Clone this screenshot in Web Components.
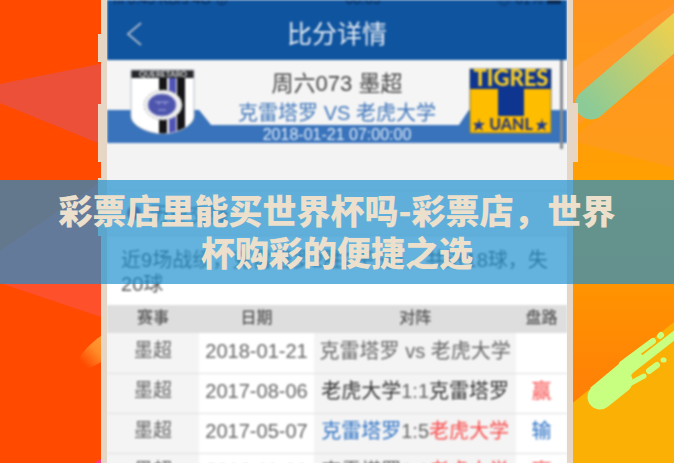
<!DOCTYPE html>
<html lang="zh-CN">
<head>
<meta charset="utf-8">
<meta name="viewport" content="width=device-width, initial-scale=1">
<title>彩票店里能买世界杯吗</title>
<style>
  body {
    margin: 0;
    font-family: "Liberation Sans", "Noto Sans CJK SC", sans-serif;
  }
</style>
</head>
<body>
<cover-page>
  <color-backdrop slot="backdrop"></color-backdrop>
  <phone-frame slot="phone">
    <nav-bar>比分详情</nav-bar>
    <match-header>
      <span slot="round">周六073 墨超</span>
      <span slot="teams">克雷塔罗 VS 老虎大学</span>
      <span slot="time">2018-01-21 07:00:00</span>
    </match-header>
    <section-title>历史交锋</section-title>
    <match-summary>近9场战绩，克雷塔罗2胜2平5负，共进18球，失20球</match-summary>
    <match-table></match-table>
  </phone-frame>
  <title-banner slot="banner">彩票店里能买世界杯吗-彩票店，世界杯购彩的便捷之选</title-banner>
</cover-page>

<script>
// Base class: puts the template of each component in its shadow root
class BaseElement extends HTMLElement {
  constructor() {
    super();
    this.attachShadow({ mode: 'open' });
    this.shadowRoot.innerHTML = this.render();
  }
}

// Stacks backdrop, phone and banner in the same grid cell
class CoverPage extends BaseElement {
  render() {
    return `
      <style>
        :host {
          display: grid;
          grid-template: 100vh / 100%;
          overflow: hidden;
        }
        slot::slotted(*) { grid-area: 1 / 1; }
        slot[name="phone"]::slotted(*) { width: 70%; justify-self: center; }
        slot[name="banner"]::slotted(*) { align-self: center; }
      </style>
      <slot name="backdrop"></slot>
      <slot name="phone"></slot>
      <slot name="banner"></slot>
    `;
  }
}

class ColorBackdrop extends BaseElement {
  render() {
    return `
      <style>
        :host { display: block; overflow: hidden; }
        svg { display: block; width: 100%; height: 100%; }
      </style>
      <svg viewBox="0 0 674 463" preserveAspectRatio="none" aria-hidden="true">
        <defs>
          <linearGradient id="sun" x1="0" y1="0" x2="0" y2="1">
            <stop offset="0" stop-color="#ff9420"/>
            <stop offset="0.4" stop-color="#ffa000"/>
            <stop offset="0.6" stop-color="#ff9500"/>
            <stop offset="0.9" stop-color="#ff7c08"/>
          </linearGradient>
          <linearGradient id="band" gradientUnits="userSpaceOnUse" x1="588" y1="106" x2="674" y2="32">
            <stop offset="0" stop-color="#8ccb97"/>
            <stop offset="1" stop-color="#ead050"/>
          </linearGradient>
          <linearGradient id="glow" x1="1" y1="0" x2="0" y2="1">
            <stop offset="0" stop-color="#ffa63c"/>
            <stop offset="0.45" stop-color="#ff8c28"/>
            <stop offset="0.8" stop-color="#ff4a00"/>
          </linearGradient>
        </defs>
        <rect width="337" height="463" fill="#ff4a00"/>
        <path d="M0 84 110 62V148L0 103Z" fill="#ec5038"/>
        <path d="M0 251 110 176V320L0 283Z" fill="#ff502c"/>
        <path d="M110 330C92 341 80 352 74 369C84 372 100 364 110 356Z" fill="url(#glow)"/>
        <path d="M94 463 101 459V463Z" fill="#ff3a80"/>
        <rect x="337" width="337" height="463" fill="url(#sun)"/>
        <path d="M570 70 674 4V60L570 130Z" fill="#ff9a38" opacity="0.6"/>
        <path d="M570 140 674 168V60Z" fill="#ff9a28" opacity="0.6"/>
        <path d="M591 104 694 16" stroke="url(#band)" stroke-width="31" stroke-linecap="round"/>
        <path d="M570 405 674 322V463H570Z" fill="#fbb006"/>
        <g stroke="#c9ff80" stroke-linecap="round" fill="none">
          <path d="M590 388 626 358C636 350 642 352 644 358L632 374C628 380 632 384 626 390L612 402Z" fill="#c9ff80" stroke="none"/>
          <path d="M600 397 620 381" stroke-width="25"/>
          <path d="M622 364 653 341" stroke-width="6"/>
          <path d="M660 336 661 335" stroke-width="6"/>
          <path d="M630 370 680 331" stroke-width="8"/>
          <path d="M622 388 644 376" stroke-width="5"/>
          <path d="M649 371 657 365" stroke-width="6"/>
          <path d="M663 360 664 360" stroke-width="5"/>
        </g>
        <path d="M98 34H110V62H98ZM98 104H110V162H98ZM98 178H110V236H98ZM564 103H578V162H564Z" fill="#e8d6c2"/>
      </svg>
    `;
  }
}

class PhoneFrame extends BaseElement {
  render() {
    return `
      <style>
        :host {
          display: block;
          position: relative;
          box-sizing: border-box;
          overflow: hidden;
          border: solid #e6d6c6;
          border-width: 0 6px;
          background: #f3f3f3;
        }
        .screen { filter: blur(1px); }
        .status {
          display: flex;
          justify-content: space-between;
          align-items: flex-end;
          height: 6px;
          padding: 0 6px 2px;
          overflow: hidden;
          background: #0f549f;
          color: #082a55;
          font-size: 14px;
          line-height: 14px;
        }
      </style>
      <div class="screen">
        <div class="status">
          <span>ııl 0.45 KB/s 4G ⊕</span>
          <span>08:05</span>
          <span>◎ 61% ▬</span>
        </div>
        <slot></slot>
      </div>
    `;
  }
}

class NavBar extends BaseElement {
  render() {
    return `
      <style>
        :host {
          display: grid;
          grid-template-columns: 1fr auto 1fr;
          align-items: center;
          height: 52px;
          padding: 0 18px;
          background: #0f549f;
          color: #e4ebf4;
        }
        button {
          justify-self: start;
          display: flex;
          padding: 0;
          border: 0;
          background: none;
        }
        h1 { margin: 0; font-size: 25px; line-height: 32px; font-weight: 400; }
      </style>
      <button aria-label="返回">
        <svg width="18" height="24" viewBox="0 0 18 24" fill="none" stroke="#a3b3c8" stroke-width="2"><path d="M16 1 3 12 16 23"/></svg>
      </button>
      <h1><slot></slot></h1>
    `;
  }
}

class MatchHeader extends BaseElement {
  render() {
    return `
      <style>
        :host {
          display: grid;
          grid-template-columns: 98px 1fr 98px;
          position: relative;
          height: 83px;
          background: #f5f5f5;
          text-align: center;
          white-space: nowrap;
        }
        /* Blue strip with the raised ends behind the crests */
        :host::before {
          content: "";
          position: absolute;
          inset: 50px 0 0;
          background: #3973bb;
          clip-path: polygon(0 0, 92px 0, 104px 15px, calc(100% - 108px) 15px, calc(100% - 98px) 0, 100% 0, 100% 100%, 0 100%);
        }
        /* Scroll thumb */
        :host::after {
          content: "";
          position: absolute;
          top: 0;
          right: 4px;
          width: 3px;
          height: 89px;
          background: #858b92;
        }
        .crest, .info { position: relative; display: flex; }
        .crest { padding-top: 8px; }
        .home { padding-left: 23px; }
        .away { padding-right: 15px; justify-content: flex-end; }
        .info { flex-direction: column; align-items: center; padding-top: 8px; }
        .round { font-size: 22px; line-height: 32px; color: #444; }
        .teams { font-size: 20px; line-height: 26px; color: #3f76ba; }
        .time { font-size: 16px; line-height: 18px; color: #e2edf9; }
        svg { font-family: Lato, sans-serif; }
      </style>
      <div class="crest home">
        <svg width="65" height="66" viewBox="0 0 65 66" role="img" aria-label="克雷塔罗">
          <defs><clipPath id="shield"><path d="M1 2H64V48C64 57 49 65 33 66C16 65 1 57 1 48Z"/></clipPath></defs>
          <g clip-path="url(#shield)">
            <rect width="65" height="66" fill="#fff"/>
            <path d="M29 8H37V66H29ZM47 8H55V66H47Z" fill="#151518"/>
            <path d="M39 8H46V66H39Z" fill="#5054b5"/>
            <path d="M0 0H65V10H0Z" fill="#24262a"/>
          </g>
          <path d="M1 2H64V48C64 57 49 65 33 66C16 65 1 57 1 48Z" fill="none" stroke="#b8bcc4"/>
          <text x="33" y="9" font-size="8" font-weight="700" fill="#ddd" text-anchor="middle">QUERETARO</text>
          <ellipse cx="33" cy="37" rx="19" ry="15" fill="#eee" stroke="#aaa" stroke-dasharray="2 2"/>
          <ellipse cx="32" cy="37" rx="14" ry="11" fill="#4d55ad" stroke="#8d91c8"/>
          <path d="M25 34H39M29 34V37M35 34V37M28 42H36" stroke="#a4a9dc"/>
        </svg>
      </div>
      <div class="info">
        <span class="round"><slot name="round"></slot></span>
        <span class="teams"><slot name="teams"></slot></span>
        <span class="time"><slot name="time"></slot></span>
      </div>
      <div class="crest away">
        <svg width="83" height="66" viewBox="0 0 83 66" role="img" aria-label="老虎大学">
          <rect x="1" y="1" width="81" height="64" fill="#ffbd00" stroke="#7a7a50"/>
          <path d="M1 1H82V21H55V48H29V21H1Z" fill="#0e358f"/>
          <text x="42" y="18" font-size="22" font-weight="900" fill="#f6cc28" text-anchor="middle">TIGRES</text>
          <text x="42" y="62" font-size="16" font-weight="900" fill="#263a78" text-anchor="middle">UANL</text>
          <path d="M10 50 11 55H16L12 58 14 63 10 60 5 63 7 58 4 55H9Z" fill="#203c88"/>
          <path d="M73 50 74 55H79L75 58 77 63 73 60 68 63 70 58 67 55H72Z" fill="#203c88"/>
        </svg>
      </div>
    `;
  }
}

class SectionTitle extends BaseElement {
  render() {
    return `
      <style>
        :host { display: block; padding-top: 47px; background: #f3f3f3; }
        h2 {
          display: flex;
          align-items: center;
          gap: 8px;
          box-sizing: border-box;
          height: 46px;
          margin: 0;
          padding: 0 20px;
          border: solid #ddd;
          border-width: 1px 0;
          color: #555;
          font-size: 20px;
          font-weight: 400;
        }
        i { width: 14px; height: 14px; border-radius: 50%; background: #a04070; }
      </style>
      <h2><i></i><slot></slot></h2>
    `;
  }
}

class MatchSummary extends BaseElement {
  render() {
    return `
      <style>
        :host { display: block; background: #fff; }
        p {
          margin: 0;
          padding: 12px 14px 9px;
          color: #555;
          font-size: 20px;
          line-height: 24px;
        }
      </style>
      <p><slot></slot></p>
    `;
  }
}

class MatchTable extends BaseElement {
  render() {
    const rows = [
      ['2018-01-21', '克雷塔罗 vs 老虎大学', ''],
      ['2017-08-06', '<b>老虎大学</b>1:1<b>克雷塔罗</b>', '<span class="win">赢</span>'],
      ['2017-05-07', '<span class="lose">克雷塔罗</span>1:5<span class="win">老虎大学</span>', '<span class="lose">输</span>'],
      ['2016-11-06', '克雷塔罗0:1<span class="win">老虎大学</span>', '<span class="win">赢</span>']
    ];
    return `
      <style>
        :host { display: block; background: #fff; }
        table { width: 100%; table-layout: fixed; border-collapse: collapse; }
        th, td { padding: 0 0 2px; text-align: center; white-space: nowrap; }
        th {
          box-sizing: border-box;
          height: 28px;
          background: #dedede;
          color: #555;
          font-size: 16px;
          line-height: 20px;
          font-weight: 500;
        }
        td {
          box-sizing: border-box;
          height: 40px;
          padding-bottom: 4px;
          border-bottom: 1px solid #e0e0e0;
          color: #666;
          font-size: 20px;
          line-height: 24px;
        }
        td:nth-child(odd) { background: #f4f4f4; }
        td:first-child { font-size: 19px; }
        b { color: #333; font-weight: 400; }
        .win { color: #f84c4c; }
        .lose { color: #2f73c5; }
        .league { width: 20%; }
        .date { width: 25%; }
        .result { width: 11%; }
      </style>
      <table>
        <thead>
          <tr><th class="league">赛事</th><th class="date">日期</th><th>对阵</th><th class="result">盘路</th></tr>
        </thead>
        <tbody>
          ${rows.map(([date, teams, result]) => `
            <tr><td>墨超</td><td>${date}</td><td>${teams}</td><td>${result}</td></tr>
          `).join('')}
        </tbody>
      </table>
    `;
  }
}

class TitleBanner extends BaseElement {
  render() {
    return `
      <style>
        :host {
          display: block;
          position: relative;
          padding: 9px 48px 11px;
          background: rgba(27, 143, 208, 0.68);
          color: #ece0cc;
          text-align: center;
        }
        h2 {
          margin: 0;
          font: 900 34px/42px "Noto Sans CJK SC", sans-serif;
          word-break: break-all;
        }
      </style>
      <h2><slot></slot></h2>
    `;
  }
}

customElements.define('cover-page', CoverPage);
customElements.define('color-backdrop', ColorBackdrop);
customElements.define('phone-frame', PhoneFrame);
customElements.define('nav-bar', NavBar);
customElements.define('match-header', MatchHeader);
customElements.define('section-title', SectionTitle);
customElements.define('match-summary', MatchSummary);
customElements.define('match-table', MatchTable);
customElements.define('title-banner', TitleBanner);
</script>
</body>
</html>
